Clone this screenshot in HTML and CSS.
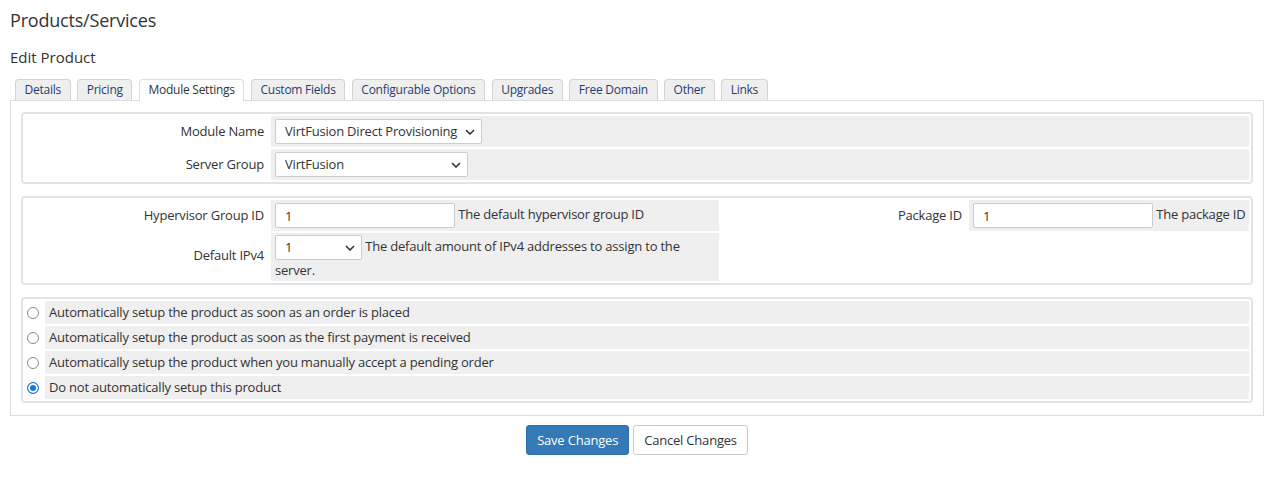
FILE: index.html
```html
<!DOCTYPE html>
<html>
<head>
<meta charset="utf-8">
<title>Edit Product</title>
<link rel="stylesheet" href="styles.css">
</head>
<body>
<h1 class="page-title">Products/Services</h1>
<h2 class="sub-title">Edit Product</h2>

<ul class="tabs">
  <li class="tab">Details</li>
  <li class="tab">Pricing</li>
  <li class="tab active">Module Settings</li>
  <li class="tab">Custom Fields</li>
  <li class="tab">Configurable Options</li>
  <li class="tab">Upgrades</li>
  <li class="tab">Free Domain</li>
  <li class="tab">Other</li>
  <li class="tab">Links</li>
</ul>

<div class="tab-content">
  <table class="form-table">
    <tr>
      <td class="fieldlabel w-label">Module Name</td>
      <td class="fieldarea">
        <span class="select-wrap">
          <select class="select sel-module"><option>VirtFusion Direct Provisioning</option></select>
          <svg class="chev" viewBox="0 0 10 6" width="10" height="6"><path d="M1 1l4 4 4-4" fill="none" stroke="#333" stroke-width="1.6"/></svg>
        </span>
      </td>
    </tr>
    <tr>
      <td class="fieldlabel">Server Group</td>
      <td class="fieldarea">
        <span class="select-wrap">
          <select class="select sel-group"><option>VirtFusion</option></select>
          <svg class="chev" viewBox="0 0 10 6" width="10" height="6"><path d="M1 1l4 4 4-4" fill="none" stroke="#333" stroke-width="1.6"/></svg>
        </span>
      </td>
    </tr>
  </table>

  <table class="form-table fixed">
    <tr>
      <td class="fieldlabel w-label">Hypervisor Group ID</td>
      <td class="fieldarea w-field1"><input class="input in-wide" type="text" value="1"> The default hypervisor group ID</td>
      <td class="fieldlabel w-label2">Package ID</td>
      <td class="fieldarea nowrap"><input class="input in-wide" type="text" value="1"> The package ID</td>
    </tr>
    <tr>
      <td class="fieldlabel label-up">Default IPv4</td>
      <td class="fieldarea tall">
        <span class="select-wrap">
          <select class="select sel-ip"><option>1</option></select>
          <svg class="chev" viewBox="0 0 10 6" width="10" height="6"><path d="M1 1l4 4 4-4" fill="none" stroke="#333" stroke-width="1.6"/></svg>
        </span> The default amount of IPv4 addresses to assign to the server.
      </td>
      <td class="blank"></td>
      <td class="blank"></td>
    </tr>
  </table>

  <table class="form-table radio-table">
    <tr>
      <td class="radio-cell"><span class="radio"></span></td>
      <td class="fieldarea radio-text">Automatically setup the product as soon as an order is placed</td>
    </tr>
    <tr>
      <td class="radio-cell"><span class="radio"></span></td>
      <td class="fieldarea radio-text">Automatically setup the product as soon as the first payment is received</td>
    </tr>
    <tr>
      <td class="radio-cell"><span class="radio"></span></td>
      <td class="fieldarea radio-text">Automatically setup the product when you manually accept a pending order</td>
    </tr>
    <tr>
      <td class="radio-cell"><span class="radio checked"></span></td>
      <td class="fieldarea radio-text">Do not automatically setup this product</td>
    </tr>
  </table>
</div>

<div class="btn-row">
  <button class="btn btn-primary">Save Changes</button>
  <button class="btn btn-default">Cancel Changes</button>
</div>
</body>
</html>
```

FILE: styles.css
```css
* { box-sizing: border-box; }

body {
  margin: 0;
  padding: 8px 10px 0 10px;
  font-family: "Open Sans", "Noto Sans", sans-serif;
  font-size: 13px;
  letter-spacing: -0.2px;
  color: #333;
  background: #fff;
}

.page-title {
  margin: 0;
  font-size: 18px;
  line-height: 24px;
  font-weight: 400;
  letter-spacing: -0.2px;
  color: #333;
}

.sub-title {
  margin: 15px 0 0 0;
  font-size: 15px;
  line-height: 20px;
  font-weight: 400;
  letter-spacing: 0;
  color: #333;
}

.tabs {
  list-style: none;
  margin: 12px 0 0 0;
  padding: 0 0 0 5px;
  display: flex;
  gap: 6.5px;
  position: relative;
  z-index: 1;
}

.tab {
  font-size: 12px;
  line-height: 15px;
  letter-spacing: -0.25px;
  padding: 2px 8.6px 3px 8.6px;
  border: 1px solid #d4d4d4;
  border-bottom: 0;
  border-radius: 4px 4px 0 0;
  background: #efefef;
  color: #1f3e70;
  height: 21px;
}

.tab.active {
  background: #fff;
  color: #333;
  border-color: #ddd;
  height: 22px;
  margin-bottom: -1px;
}

.tab-content {
  border: 1px solid #ddd;
  padding: 11px 10px 12px 10px;
  background: #fff;
}

.form-table {
  width: 100%;
  border: 2px solid #e1e5e9;
  border-radius: 4px;
  border-collapse: separate;
  border-spacing: 2px;
  margin-bottom: 12px;
}

.form-table.fixed { table-layout: fixed; }

.form-table:last-child { margin-bottom: 0; }

.fieldlabel {
  text-align: right;
  padding: 3px 5px 3px 3px;
  background: #fff;
  white-space: nowrap;
  vertical-align: middle;
  line-height: 17px;
}

.fieldlabel.label-up { padding-bottom: 6px; }

.fieldarea {
  background: #efefef;
  padding: 3px 4px;
  vertical-align: middle;
  line-height: 18px;
}

.nowrap { white-space: nowrap; }

.w-label { width: 244px; }
.w-field1 { width: 448px; }
.w-label2 { width: 246px; }

.fieldarea.tall {
  padding: 2px 4px 1px 4px;
  line-height: 20px;
}

.blank { background: #fff; }

.select-wrap {
  position: relative;
  display: inline-block;
  vertical-align: middle;
}

.select {
  -webkit-appearance: none;
  appearance: none;
  font-family: "Open Sans", "Noto Sans", sans-serif;
  font-size: 13px;
  letter-spacing: -0.2px;
  color: #333;
  height: 25px;
  line-height: 19px;
  padding: 2px 20px 2px 9px;
  border: 1px solid #ccc;
  border-radius: 2px;
  background: #fff;
  display: block;
}

.sel-module { width: 207px; }
.sel-group { width: 193px; }
.sel-ip { width: 87px; }

.chev {
  position: absolute;
  right: 7px;
  top: 10px;
  pointer-events: none;
}

.input {
  font-family: "Open Sans", "Noto Sans", sans-serif;
  font-size: 13px;
  color: #333;
  height: 25px;
  padding: 2px 9px;
  border: 1px solid #ccc;
  border-radius: 2px;
  background: #fff;
  vertical-align: middle;
}

.in-wide { width: 180px; }

.radio-cell {
  width: 18px;
  background: #fff;
  padding: 0 0 0 2px;
  text-align: left;
  vertical-align: middle;
}

.radio-text {
  padding: 3px 4px;
  line-height: 17px;
}

.radio {
  display: inline-block;
  width: 12px;
  height: 12px;
  border: 1px solid #8a8a8a;
  border-radius: 50%;
  background: #fff;
  vertical-align: middle;
  position: relative;
  top: -1px;
}

.radio.checked {
  border: 1px solid #1a73e8;
  box-shadow: inset 0 0 0 2px #fff;
  background: #1a73e8;
}

.btn-row {
  display: flex;
  justify-content: center;
  gap: 4px;
  margin-top: 9px;
}

.btn {
  font-family: "Open Sans", "Noto Sans", sans-serif;
  font-size: 13px;
  letter-spacing: -0.2px;
  line-height: 18px;
  height: 30px;
  padding: 5px 10px;
  border-radius: 3px;
  cursor: pointer;
}

.btn-primary {
  background: #337ab7;
  border: 1px solid #2e6da4;
  color: #fff;
}

.btn-default {
  background: #fff;
  border: 1px solid #ccc;
  color: #333;
}
```
